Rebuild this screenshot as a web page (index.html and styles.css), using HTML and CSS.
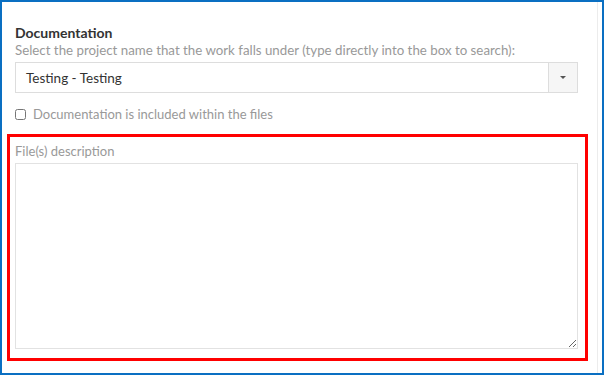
FILE: index.html
```html
<!DOCTYPE html>
<html lang="en">

<head>
    <meta charset="UTF-8">
    <meta name="viewport" content="width=device-width, initial-scale=1.0">
    <title>Documentation</title>
    <link rel="stylesheet" href="styles.css">
</head>

<body>
    <div class="frame">
        <div class="panel">
            <!-- 标题和说明 -->
            <h3 class="field-title">Documentation</h3>
            <p class="field-hint">Select the project name that the work falls under (type directly into the box to search):</p>

            <!-- 项目选择框 -->
            <div class="select-box">
                <span class="select-value">Testing - Testing</span>
                <span class="select-arrow"><span class="caret"></span></span>
            </div>

            <!-- 复选框 -->
            <label class="check-row">
                <input type="checkbox" class="check-input">
                <span>Documentation is included within the files</span>
            </label>

            <!-- 文件描述（红框标注） -->
            <div class="highlight">
                <div class="desc-label">File(s) description</div>
                <textarea class="desc-input"></textarea>
            </div>
        </div>
    </div>
</body>

</html>
```

FILE: styles.css
```css
/* 页面基础 */
body {
    margin: 0;
    font-family: "Lato", "Open Sans", "Liberation Sans", sans-serif;
    background-color: #fff;
}

/* 外层蓝色边框 */
.frame {
    box-sizing: border-box;
    width: 604px;
    height: 375px;
    border: 2px solid #0a6fc2;
    box-shadow: inset -4px 0 0 #fff, inset -5px 0 0 #ececec;
}

.panel {
    padding: 22px 24px 0 13px;
}

/* 标题 */
.field-title {
    margin: 0;
    font-size: 14px;
    line-height: 18px;
    font-weight: 700;
    color: #333;
}

/* 说明文字 */
.field-hint {
    margin: 0;
    font-size: 13.3px;
    line-height: 16px;
    color: #999;
}

/* 选择框 */
.select-box {
    display: flex;
    align-items: stretch;
    height: 31px;
    box-sizing: border-box;
    margin-top: 4px;
    border: 1px solid #ddd;
}

.select-value {
    flex-grow: 1;
    display: flex;
    align-items: center;
    padding-left: 10px;
    font-size: 13.5px;
    color: #333;
}

.select-arrow {
    width: 28px;
    display: flex;
    align-items: center;
    justify-content: center;
    border-left: 1px solid #ddd;
    background-color: #f6f6f6;
}

.caret {
    width: 0;
    height: 0;
    border-left: 3px solid transparent;
    border-right: 3px solid transparent;
    border-top: 3px solid #555;
}

/* 复选框行 */
.check-row {
    display: flex;
    align-items: center;
    gap: 7px;
    margin-top: 12px;
    height: 18px;
    font-size: 13px;
    color: #999;
}

.check-input {
    margin: 0;
    width: 11px;
    height: 11px;
}

/* 红色标注框 */
.highlight {
    margin: 11px -10px 0 -8px;
    border: 3px solid #f00;
    padding: 6px 7px 9px 5px;
}

.desc-label {
    font-size: 13px;
    line-height: 16px;
    color: #999;
}

.desc-input {
    display: block;
    box-sizing: border-box;
    width: 100%;
    height: 186px;
    margin-top: 4px;
    border: 1px solid #e2e2e2;
    font-family: inherit;
}
```
